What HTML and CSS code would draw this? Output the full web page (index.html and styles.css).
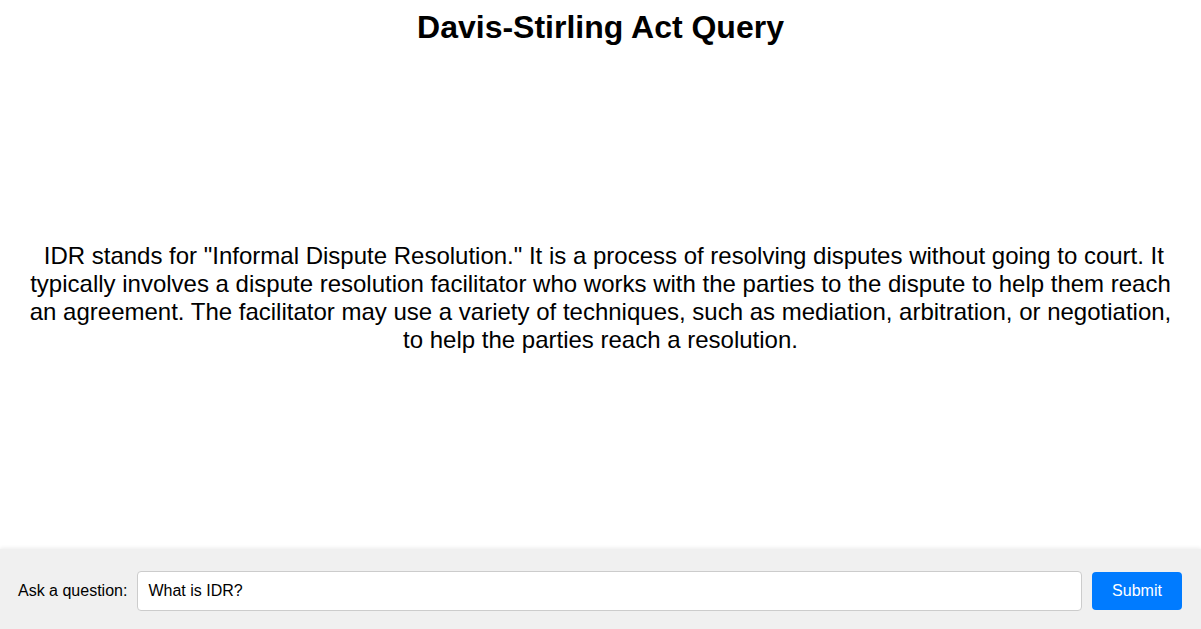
FILE: index.html
```html
<!DOCTYPE html>
<html lang="en">
<head>
    <meta charset="UTF-8">
    <meta name="viewport" content="width=device-width, initial-scale=1.0">
    <title>Davis-Stirling Act Query</title>
    <link rel="stylesheet" href="styles.css">
</head>
<body>
    <div class="page">
        <h1>Davis-Stirling Act Query</h1>
        <div class="answer">
            <p>&nbsp;IDR stands for "Informal Dispute Resolution." It is a process of resolving disputes without going to court. It typically involves a dispute resolution facilitator who works with the parties to the dispute to help them reach an agreement. The facilitator may use a variety of techniques, such as mediation, arbitration, or negotiation, to help the parties reach a resolution.</p>
        </div>
        <form class="query-bar">
            <label for="question">Ask a question:</label>
            <input type="text" id="question" value="What is IDR?">
            <button type="submit">Submit</button>
        </form>
    </div>
</body>
</html>
```

FILE: styles.css
```css
body {
    margin: 0;
    font-family: 'Liberation Sans', Arial, sans-serif;
    color: #000;
    background: #fff;
}

.page {
    display: flex;
    flex-direction: column;
    height: 100vh;
}

h1 {
    font-size: 32px;
    text-align: center;
    margin: 9px 0 0;
}

.answer {
    flex: 1;
    display: flex;
    align-items: center;
    justify-content: center;
    padding: 0 20px;
}

.answer p {
    margin: 0;
    font-size: 24px;
    text-align: center;
}

.query-bar {
    display: flex;
    align-items: center;
    gap: 10px;
    padding: 22px 19px 18px 18px;
    background: #f0f0f0;
    box-shadow: 0 -1px 4px rgba(0, 0, 0, 0.08);
}

.query-bar label {
    font-size: 16px;
}

.query-bar input {
    flex: 1;
    height: 40px;
    box-sizing: border-box;
    padding: 0 10px;
    font-family: inherit;
    font-size: 16px;
    border: 1px solid #ccc;
    border-radius: 4px;
    background: #fff;
    color: #000;
}

.query-bar button {
    width: 90px;
    height: 38px;
    font-family: inherit;
    font-size: 16px;
    color: #fff;
    background-color: #007bff;
    border: none;
    border-radius: 4px;
}
```
